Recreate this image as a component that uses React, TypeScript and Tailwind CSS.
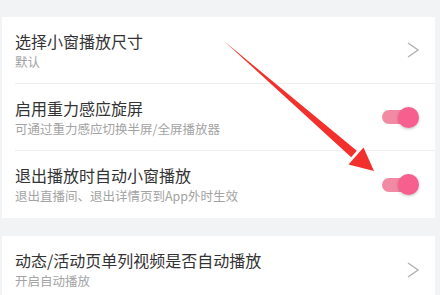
import React from 'react';

type Row = {
  title: string;
  sub: string;
  kind: 'link' | 'toggle';
};

const group1: Row[] = [
  { title: '选择小窗播放尺寸', sub: '默认', kind: 'link' },
  { title: '启用重力感应旋屏', sub: '可通过重力感应切换半屏/全屏播放器', kind: 'toggle' },
  { title: '退出播放时自动小窗播放', sub: '退出直播间、退出详情页到App外时生效', kind: 'toggle' },
];

const group2: Row[] = [{ title: '动态/活动页单列视频是否自动播放', sub: '开启自动播放', kind: 'link' }];

function Chevron() {
  return (
    <svg width="12" height="16" viewBox="0 0 12 16" fill="none">
      <polyline points="1,1 11,8 1,15" stroke="#b3b3b3" strokeWidth="1.4" strokeLinejoin="miter" />
    </svg>
  );
}

function Toggle() {
  return (
    <div className="relative w-[37px] h-[21px]">
      <div className="absolute left-0 top-[3.5px] w-[30px] h-[14px] rounded-full bg-[#f38aa3]" />
      <div className="absolute right-0 top-0 w-[21px] h-[21px] rounded-full bg-[#f7608e] shadow-[0_1px_3px_rgba(0,0,0,0.25)]" />
    </div>
  );
}

function SettingRow({ row, divider }: { row: Row; divider: boolean }) {
  return (
    <div className="pl-[13px]">
      <div className={`flex items-center h-[67px] pr-[16px] ${divider ? 'border-b border-[#eeeeee]' : ''}`}>
        <div className="flex-1 min-w-0 -mt-[1px]">
          <div className="text-[16px] leading-[23px] text-[#333333]">{row.title}</div>
          <div className="text-[12.5px] leading-[17px] text-[#a3a3a3]">{row.sub}</div>
        </div>
        {row.kind === 'link' ? <Chevron /> : <Toggle />}
      </div>
    </div>
  );
}

export default function App() {
  return (
    <div
      className="relative w-[440px] h-[295px] overflow-hidden bg-[#f2f3f5] pt-[17px] pl-[2px] pr-[5px]"
      style={{ fontFamily: '"Noto Sans CJK SC", "Noto Sans", sans-serif' }}
    >
      <div className="bg-white">
        {group1.map((r, i) => (
          <SettingRow key={r.title} row={r} divider={i < group1.length - 1} />
        ))}
      </div>
      <div className="h-[19px] -mt-px" />
      <div className="bg-white">
        {group2.map((r) => (
          <SettingRow key={r.title} row={r} divider={false} />
        ))}
      </div>

      <svg className="absolute left-0 top-0 pointer-events-none" width="440" height="295" viewBox="0 0 440 295">
        <polygon points="224.5,41.5 356.8,150.8 351.2,157.2" fill="#f2302c" />
        <polygon points="348.5,164.5 363.5,147.5 374,171" fill="#f2302c" />
      </svg>
    </div>
  );
}
